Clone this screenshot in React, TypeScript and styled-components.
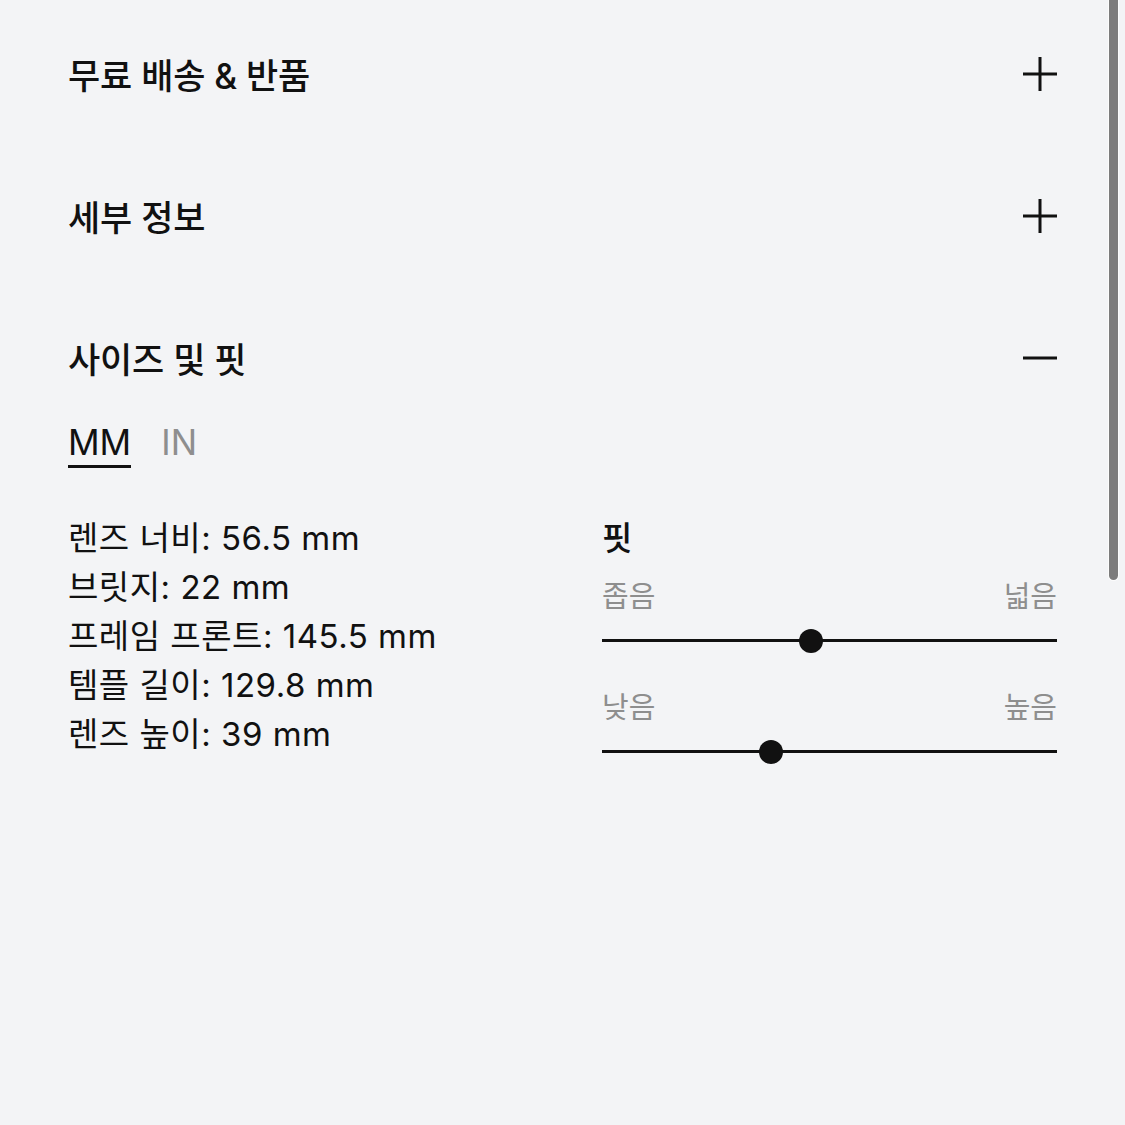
import React, { useState } from 'react';
import styled, { createGlobalStyle } from 'styled-components';

const GlobalStyle = createGlobalStyle`
  html, body {
    margin: 0;
    padding: 0;
    background: #f3f4f6;
  }
  body {
    font-family: "Inter", "Noto Sans CJK KR", sans-serif;
    color: #111;
  }
`;

const Page = styled.div`
  position: relative;
  width: 1125px;
  height: 1125px;
  box-sizing: border-box;
  padding: 24px 68px 0 68px;
  background: #f3f4f6;
  overflow: hidden;
`;

const Section = styled.div`
  display: flex;
  flex-direction: column;
  margin-bottom: 42px;
`;

const Header = styled.div`
  display: flex;
  align-items: center;
  justify-content: space-between;
  height: 100px;
  cursor: pointer;
`;

const Title = styled.h2`
  margin: 0 0 2px 0;
  font-size: 35px;
  font-weight: 500;
  letter-spacing: -0.2px;
`;

const IconBox = styled.div`
  width: 36px;
  height: 36px;
  margin-right: -1px;
  display: flex;
  align-items: center;
  justify-content: center;
`;

const Tabs = styled.div`
  display: flex;
  gap: 30px;
  padding-top: 14px;
`;

const Tab = styled.button<{ $active: boolean }>`
  border: none;
  background: none;
  padding: 0 0 3px 0;
  font-family: "Inter", "Noto Sans CJK KR", sans-serif;
  font-size: 35px;
  font-weight: 400;
  line-height: 40px;
  color: ${(p) => (p.$active ? '#111' : '#8e8e8e')};
  border-bottom: 3px solid ${(p) => (p.$active ? '#111' : 'transparent')};
  cursor: pointer;
`;

const Body = styled.div`
  display: grid;
  grid-template-columns: 534px 1fr;
  padding-top: 46px;
`;

const Specs = styled.div`
  display: flex;
  flex-direction: column;
`;

const SpecLine = styled.div`
  font-size: 33px;
  line-height: 49px;
  letter-spacing: 0.5px;
`;

const Fit = styled.div`
  display: flex;
  flex-direction: column;
`;

const FitTitle = styled.div`
  font-size: 33px;
  font-weight: 500;
  line-height: 49px;
  margin-bottom: 16px;
`;

const SliderBlock = styled.div`
  display: flex;
  flex-direction: column;
  margin-bottom: 48px;
`;

const Labels = styled.div`
  display: flex;
  justify-content: space-between;
  font-size: 29px;
  line-height: 36px;
  color: #8e8e8e;
`;

const Track = styled.div`
  position: relative;
  height: 3px;
  background: #111;
  margin-top: 24px;
`;

const Thumb = styled.div`
  position: absolute;
  top: 50%;
  width: 24px;
  height: 24px;
  border-radius: 50%;
  background: #111;
  transform: translate(-50%, -50%);
`;

const Scrollbar = styled.div`
  position: absolute;
  top: -10px;
  right: 7px;
  width: 9px;
  height: 590px;
  border-radius: 5px;
  background: #7c7c7c;
  box-shadow: 0 0 0 1px rgba(255, 255, 255, 0.7);
`;

const Plus = () => (
  <svg width="36" height="36" viewBox="0 0 36 36">
    <path d="M18 1v34M1 18h34" stroke="#111" strokeWidth="3" fill="none" />
  </svg>
);

const Minus = () => (
  <svg width="36" height="36" viewBox="0 0 36 36">
    <path d="M1 18h34" stroke="#111" strokeWidth="3" fill="none" />
  </svg>
);

const specs = [
  { label: '렌즈 너비', mm: 56.5 },
  { label: '브릿지', mm: 22 },
  { label: '프레임 프론트', mm: 145.5 },
  { label: '템플 길이', mm: 129.8 },
  { label: '렌즈 높이', mm: 39 },
];

const sliders = [
  { left: '좁음', right: '넓음', value: 46 },
  { left: '낮음', right: '높음', value: 37.2 },
];

const App: React.FC = () => {
  const [unit, setUnit] = useState<'MM' | 'IN'>('MM');

  const format = (mm: number) =>
    unit === 'MM' ? `${mm} mm` : `${(mm / 25.4).toFixed(2)} in`;

  return (
    <Page>
      <GlobalStyle />
      <Section>
        <Header>
          <Title>무료 배송 &amp; 반품</Title>
          <IconBox>
            <Plus />
          </IconBox>
        </Header>
      </Section>
      <Section>
        <Header>
          <Title>세부 정보</Title>
          <IconBox>
            <Plus />
          </IconBox>
        </Header>
      </Section>
      <Section>
        <Header>
          <Title>사이즈 및 핏</Title>
          <IconBox>
            <Minus />
          </IconBox>
        </Header>
        <Tabs>
          <Tab $active={unit === 'MM'} onClick={() => setUnit('MM')}>
            MM
          </Tab>
          <Tab $active={unit === 'IN'} onClick={() => setUnit('IN')}>
            IN
          </Tab>
        </Tabs>
        <Body>
          <Specs>
            {specs.map((s) => (
              <SpecLine key={s.label}>
                {s.label}: {format(s.mm)}
              </SpecLine>
            ))}
          </Specs>
          <Fit>
            <FitTitle>핏</FitTitle>
            {sliders.map((s) => (
              <SliderBlock key={s.left}>
                <Labels>
                  <span>{s.left}</span>
                  <span>{s.right}</span>
                </Labels>
                <Track>
                  <Thumb style={{ left: `${s.value}%` }} />
                </Track>
              </SliderBlock>
            ))}
          </Fit>
        </Body>
      </Section>
      <Scrollbar />
    </Page>
  );
};

export default App;
